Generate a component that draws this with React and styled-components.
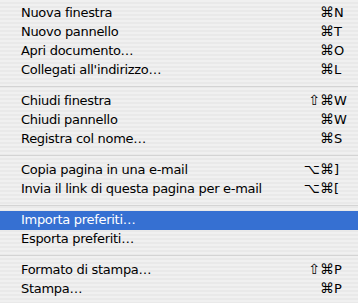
import styled, { createGlobalStyle } from "styled-components";

const GlobalStyle = createGlobalStyle`
  html, body {
    margin: 0;
    padding: 0;
    background: #ececec;
  }
`;

const Menu = styled.div`
  width: 358px;
  height: 303px;
  box-sizing: border-box;
  padding: 4px 0;
  display: flex;
  flex-direction: column;
  font-family: "DejaVu Sans", "Lucida Grande", sans-serif;
  font-size: 13px;
  color: #000;
  background: repeating-linear-gradient(
    to bottom,
    #f0f0f0 0px,
    #f0f0f0 2px,
    #e9e9e9 2px,
    #e9e9e9 4px
  );
`;

const Item = styled.div`
  height: 19px;
  display: grid;
  grid-template-columns: 1fr auto 11px;
  align-items: center;
  padding: 0 13px 0 21px;
  background: ${(p) => (p.$active ? "#3670d2" : "transparent")};
  color: ${(p) => (p.$active ? "#fff" : "#000")};
  white-space: nowrap;
  line-height: 19px;
`;

const Label = styled.span`
  letter-spacing: -0.3px;
  transform: translateY(-1px);
`;

const Mods = styled.span`
  text-align: right;
  font-size: 14px;
  transform: translateY(-1px);
`;

const Key = styled.span`
  text-align: left;
  transform: translateY(-1px);
`;

const Separator = styled.div`
  height: 12px;
  display: flex;
  align-items: center;
  &::after {
    content: "";
    flex: 1;
    height: 1px;
    background: #d4d4d4;
  }
`;

const groups = [
  [
    ["Nuova finestra", "⌘", "N"],
    ["Nuovo pannello", "⌘", "T"],
    ["Apri documento…", "⌘", "O"],
    ["Collegati all'indirizzo…", "⌘", "L"],
  ],
  [
    ["Chiudi finestra", "⇧⌘", "W"],
    ["Chiudi pannello", "⌘", "W"],
    ["Registra col nome…", "⌘", "S"],
  ],
  [
    ["Copia pagina in una e-mail", "⌥⌘", "]"],
    ["Invia il link di questa pagina per e-mail", "⌥⌘", "["],
  ],
  [
    ["Importa preferiti…", "", "", true],
    ["Esporta preferiti…", "", ""],
  ],
  [
    ["Formato di stampa…", "⇧⌘", "P"],
    ["Stampa…", "⌘", "P"],
  ],
];

export default function App() {
  return (
    <>
      <GlobalStyle />
      <Menu>
        {groups.map((group, gi) => (
          <div key={gi}>
            {gi > 0 && <Separator />}
            {group.map(([label, mods, key, active]) => (
              <Item key={label} $active={active}>
                <Label>{label}</Label>
                <Mods>{mods}</Mods>
                <Key>{key}</Key>
              </Item>
            ))}
          </div>
        ))}
      </Menu>
    </>
  );
}
